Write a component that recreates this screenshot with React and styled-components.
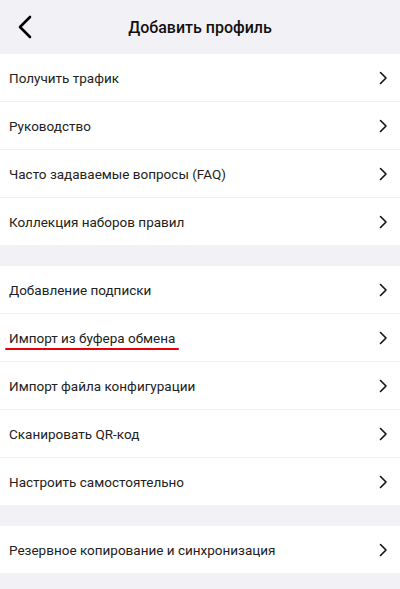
import React from "react";
import styled, { createGlobalStyle } from "styled-components";

const Global = createGlobalStyle`
  html, body { margin: 0; padding: 0; background: #f2f1f6; }
  body { font-family: Roboto, "Noto Sans", "Liberation Sans", sans-serif; }
`;

const Page = styled.div`
  width: 400px;
  min-height: 589px;
  background: #f2f1f6;
  display: flex;
  flex-direction: column;
`;

const Header = styled.header`
  height: 54px;
  display: grid;
  grid-template-columns: 54px 1fr 54px;
  align-items: center;
`;

const BackButton = styled.button`
  border: none;
  background: none;
  padding: 0 0 0 16px;
  display: flex;
  align-items: center;
  height: 100%;
  cursor: pointer;
`;

const Title = styled.h1`
  margin: 0;
  text-align: center;
  font-size: 16px;
  font-weight: 500;
  color: #111;
`;

const Groups = styled.div`
  display: flex;
  flex-direction: column;
  gap: 21px;
`;

const Group = styled.div`
  background: #fff;
  display: flex;
  flex-direction: column;
`;

const Row = styled.div`
  height: 47px;
  display: flex;
  align-items: center;
  justify-content: space-between;
  padding: 0 12px 0 9px;
  border-top: ${(p) => (p.$first ? "none" : "1px solid #f1f1f3")};
  cursor: pointer;
`;

const Label = styled.span`
  position: relative;
  font-size: 13.5px;
  color: #222;
`;

const Mark = styled.span`
  position: absolute;
  left: -4px;
  right: -4px;
  bottom: -4px;
  height: 2px;
  border-radius: 1px;
  background: #e8000b;
`;

const Chevron = () => (
  <svg width="10" height="14" viewBox="0 0 10 14">
    <path d="M2.5 1.5 L8 7 L2.5 12.5" fill="none" stroke="#111" strokeWidth="1.6" strokeLinecap="round" strokeLinejoin="round" />
  </svg>
);

const BackIcon = () => (
  <svg width="18" height="24" viewBox="0 0 18 24">
    <path d="M14 2 L4 12 L14 22" fill="none" stroke="#000" strokeWidth="2.6" strokeLinecap="round" strokeLinejoin="round" />
  </svg>
);

const groups = [
  ["Получить трафик", "Руководство", "Часто задаваемые вопросы (FAQ)", "Коллекция наборов правил"],
  ["Добавление подписки", "Импорт из буфера обмена", "Импорт файла конфигурации", "Сканировать QR-код", "Настроить самостоятельно"],
  ["Резервное копирование и синхронизация"],
];

export default function App() {
  return (
    <Page>
      <Global />
      <Header>
        <BackButton aria-label="Назад"><BackIcon /></BackButton>
        <Title>Добавить профиль</Title>
        <span />
      </Header>
      <Groups>
        {groups.map((g, gi) => (
          <Group key={gi}>
            {g.map((item, i) => (
              <Row key={item} $first={i === 0}>
                <Label>
                  {item}
                  {item === "Импорт из буфера обмена" && <Mark />}
                </Label>
                <Chevron />
              </Row>
            ))}
          </Group>
        ))}
      </Groups>
    </Page>
  );
}
